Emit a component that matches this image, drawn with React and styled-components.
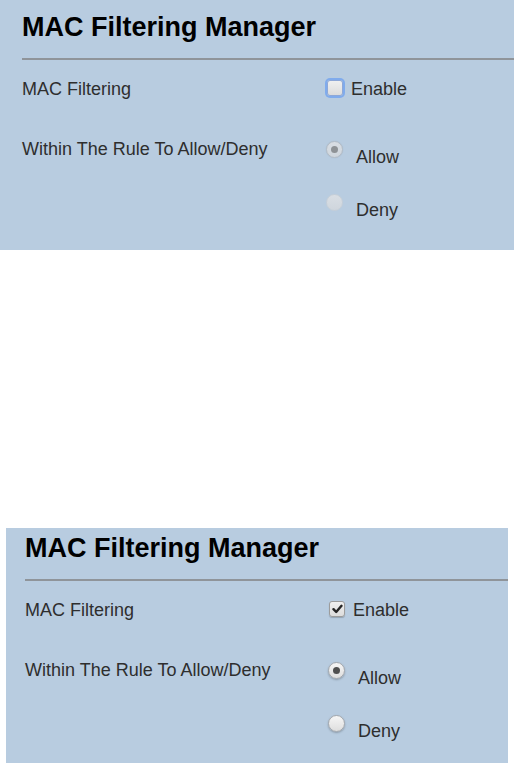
import React from "react";
import styled, { createGlobalStyle } from "styled-components";

const GlobalStyle = createGlobalStyle`
  html, body {
    margin: 0;
    padding: 0;
    background: #ffffff;
    overflow: hidden;
  }
  body {
    font-family: "Liberation Sans", Arial, sans-serif;
  }
`;

const Page = styled.div`
  display: flex;
  flex-direction: column;
  width: 514px;
  height: 763px;
  overflow: hidden;
`;

const Panel = styled.section`
  box-sizing: border-box;
  background: #b8cce0;
  margin-left: ${(p) => p.$left}px;
  margin-top: ${(p) => p.$top}px;
  width: ${(p) => p.$width}px;
  padding: ${(p) => p.$pt}px 0 30px ${(p) => p.$pl}px;
  flex-shrink: 0;
`;

const Title = styled.h2`
  margin: 0;
  font-size: 27px;
  line-height: 32px;
  font-weight: bold;
  color: #000;
`;

const Divider = styled.div`
  height: 2px;
  margin-top: 15px;
  background: #8f949a;
`;

const Form = styled.div`
  display: flex;
  flex-direction: column;
  gap: 40px;
  margin-top: 19px;
`;

const Row = styled.div`
  display: grid;
  grid-template-columns: ${(p) => p.$labelWidth}px 1fr;
  align-items: start;
`;

const Label = styled.div`
  font-size: 18px;
  line-height: 20px;
  color: #2e2e2e;
`;

const Options = styled.div`
  display: flex;
  flex-direction: column;
  gap: 25px;
`;

const Option = styled.label`
  display: flex;
  align-items: flex-start;
  font-size: 18px;
  line-height: 20px;
  color: #2e2e2e;
`;

const CheckOption = styled(Option)`
  gap: 8px;
`;

const Box = styled.span`
  box-sizing: border-box;
  width: 16px;
  height: 16px;
  margin: 1px 0 0 1px;
  border-radius: 3px;
  border: 1px solid ${(p) => (p.$focused ? "#8ea8d8" : "#9c9c9c")};
  background: linear-gradient(#f0f0f0, #dcdcdc);
  box-shadow: ${(p) =>
    p.$focused ? "0 0 0 2px rgba(110, 160, 240, 0.75)" : "0 1px 1px rgba(0,0,0,0.2)"};
  display: flex;
  align-items: center;
  justify-content: center;
`;

const Radio = styled.span`
  box-sizing: border-box;
  width: 17px;
  height: 17px;
  margin-top: 2px;
  margin-right: 13px;
  border-radius: 50%;
  flex-shrink: 0;
  border: 1px solid ${(p) => (p.$disabled ? (p.$checked ? "#b3bcc6" : "#c6cfd8") : "#a4a8ad")};
  background: ${(p) =>
    p.$disabled ? "linear-gradient(#d9dee4, #cfd6dd)" : "linear-gradient(#f6f6f6, #dedede)"};
  box-shadow: ${(p) =>
    p.$disabled
      ? p.$checked
        ? "0 0 1px rgba(0,0,0,0.15)"
        : "none"
      : "0 1px 2px rgba(0,0,0,0.25)"};
  display: flex;
  align-items: center;
  justify-content: center;

  &::after {
    content: "";
    width: 7px;
    height: 7px;
    border-radius: 50%;
    background: ${(p) => (p.$disabled ? "#8e9296" : "#4f4f4f")};
    display: ${(p) => (p.$checked ? "block" : "none")};
  }
`;

const OptionText = styled.span`
  padding-top: 8px;
`;

function Check() {
  return (
    <svg width="11" height="10" viewBox="0 0 11 10">
      <path d="M1.5 5.2 L4.2 8 L9.5 1.8" fill="none" stroke="#262626" strokeWidth="2.4" strokeLinecap="round" strokeLinejoin="round" />
    </svg>
  );
}

function FilterPanel({ enabled, left, top, width, pt, pl, labelWidth }) {
  return (
    <Panel $left={left} $top={top} $width={width} $pt={pt} $pl={pl}>
      <Title>MAC Filtering Manager</Title>
      <Divider />
      <Form>
        <Row $labelWidth={labelWidth}>
          <Label>MAC Filtering</Label>
          <CheckOption>
            <Box $focused={!enabled}>{enabled && <Check />}</Box>
            Enable
          </CheckOption>
        </Row>
        <Row $labelWidth={labelWidth}>
          <Label>Within The Rule To Allow/Deny</Label>
          <Options>
            <Option>
              <Radio $checked $disabled={!enabled} />
              <OptionText>Allow</OptionText>
            </Option>
            <Option>
              <Radio $disabled={!enabled} />
              <OptionText>Deny</OptionText>
            </Option>
          </Options>
        </Row>
      </Form>
    </Panel>
  );
}

export default function App() {
  return (
    <>
      <GlobalStyle />
      <Page>
        <FilterPanel enabled={false} left={0} top={0} width={514} pt={11} pl={22} labelWidth={304} />
        <FilterPanel enabled left={6} top={278} width={502} pt={4} pl={19} labelWidth={303} />
      </Page>
    </>
  );
}
